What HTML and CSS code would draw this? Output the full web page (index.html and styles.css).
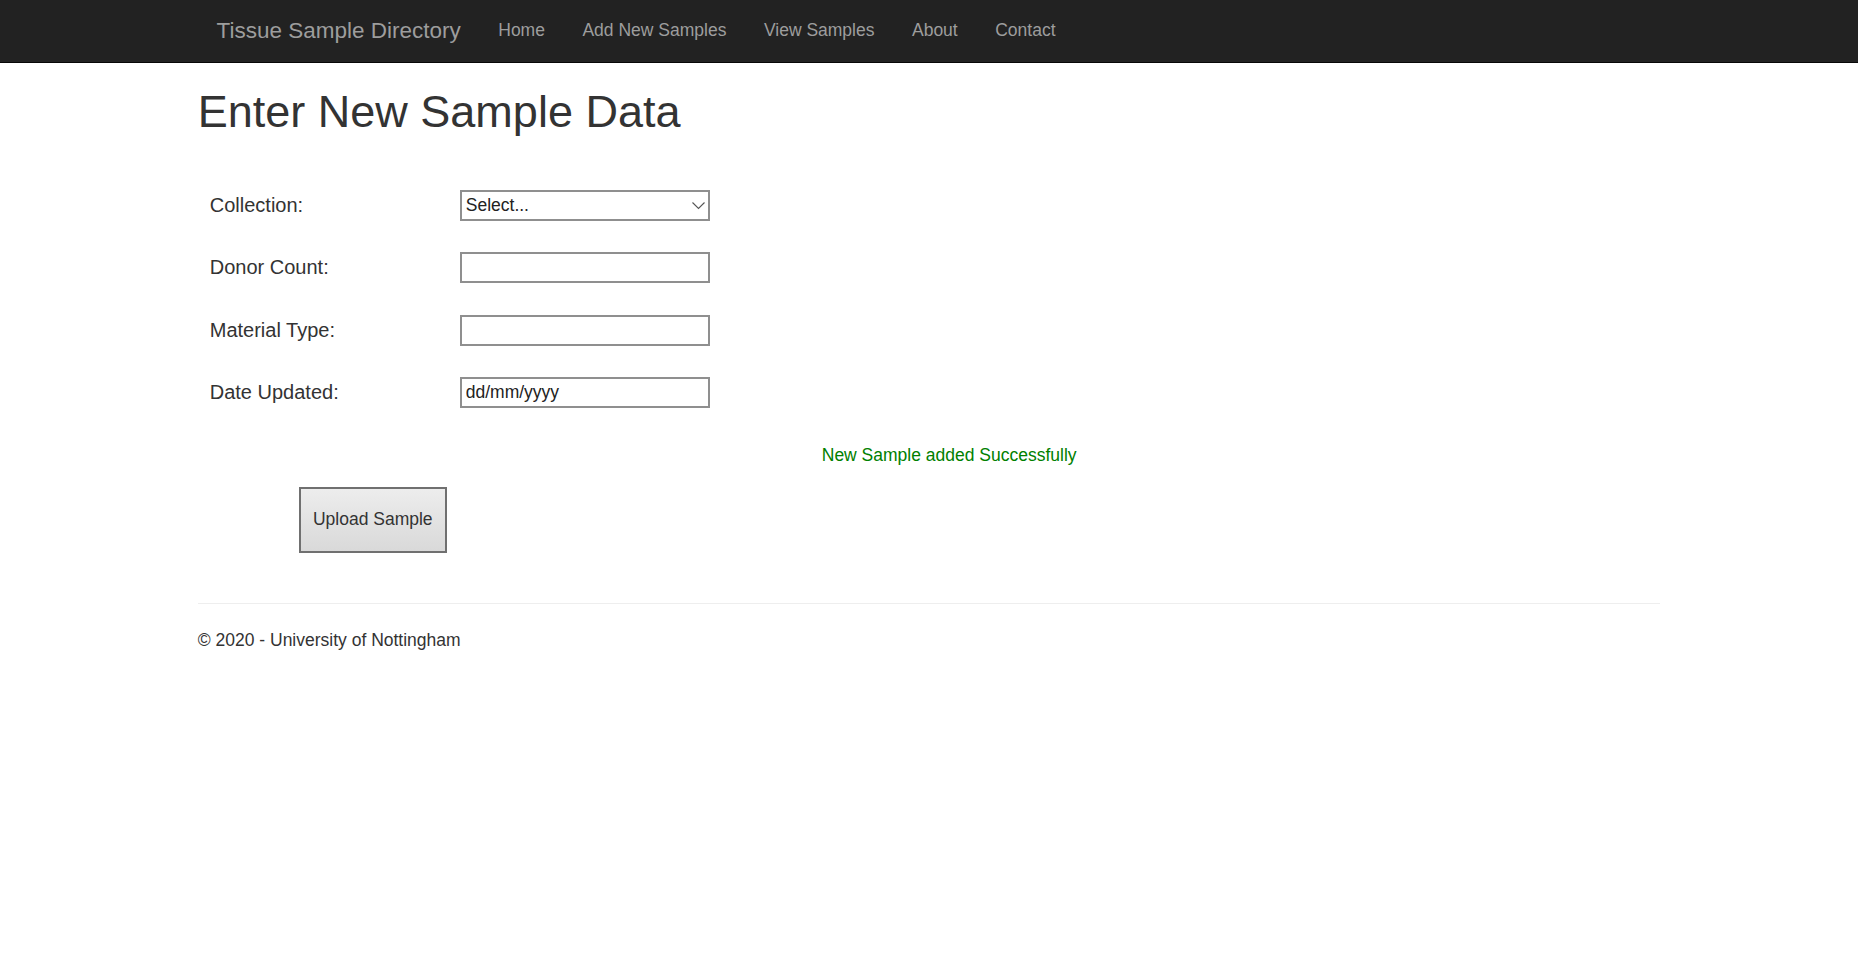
FILE: index.html
```html
<!DOCTYPE html>
<html lang="en">
<head>
<meta charset="utf-8">
<title>Enter New Sample Data - Tissue Sample Directory</title>
<link rel="stylesheet" href="styles.css">
</head>
<body>
<nav class="navbar">
  <div class="nav-container">
    <a class="brand" href="#">Tissue Sample Directory</a>
    <ul class="nav-links">
      <li><a href="#">Home</a></li>
      <li><a href="#">Add New Samples</a></li>
      <li><a href="#">View Samples</a></li>
      <li><a href="#">About</a></li>
      <li><a href="#">Contact</a></li>
    </ul>
  </div>
</nav>
<main class="container">
  <h1 class="page-title">Enter New Sample Data</h1>
  <form class="sample-form">
    <div class="form-row">
      <label class="form-label">Collection:</label>
      <div class="select-wrap">
        <select class="form-select"><option>Select...</option></select>
        <svg class="select-arrow" width="13" height="8" viewBox="0 0 13 8"><polyline points="0.5,0.5 6.5,6.5 12.5,0.5" fill="none" stroke="#555" stroke-width="1.1"/></svg>
      </div>
    </div>
    <div class="form-row">
      <label class="form-label">Donor Count:</label>
      <input class="form-input" type="text">
    </div>
    <div class="form-row">
      <label class="form-label">Material Type:</label>
      <input class="form-input" type="text">
    </div>
    <div class="form-row">
      <label class="form-label">Date Updated:</label>
      <input class="form-input" type="text" value="dd/mm/yyyy">
    </div>
    <div class="form-row">
      <span class="success-msg">New Sample added Successfully</span>
    </div>
    <div class="button-row">
      <button class="upload-btn" type="button">Upload Sample</button>
    </div>
  </form>
  <hr class="divider">
  <footer class="footer">
    <p>&copy; 2020 - University of Nottingham</p>
  </footer>
</main>
</body>
</html>
```
FILE: styles.css
```css
html, body {
  margin: 0;
  padding: 0;
  background: #fff;
}
body {
  font-family: "Liberation Sans", Arial, Helvetica, sans-serif;
  font-size: 17.5px;
  line-height: 25px;
  color: #333;
}
.navbar {
  background: #222;
  height: 61.5px;
  border-bottom: 1px solid #080808;
}
.nav-container {
  width: 1462.5px;
  margin: 0 auto;
  box-sizing: border-box;
  padding: 0 18.75px;
  display: flex;
  align-items: center;
  height: 100%;
}
.brand {
  color: #9d9d9d;
  text-decoration: none;
  font-size: 22.5px;
  line-height: 25px;
  padding: 18.75px 18.75px;
  margin-left: -18.75px;
}
.nav-links {
  list-style: none;
  margin: 0;
  padding: 0;
  display: flex;
}
.nav-links a {
  display: block;
  color: #9d9d9d;
  text-decoration: none;
  padding: 18.75px 18.75px;
  line-height: 25px;
}
.container {
  width: 1462.5px;
  margin: 0 auto;
}
.page-title {
  font-size: 45px;
  line-height: 49.5px;
  font-weight: 500;
  margin: 24px 0 12.5px;
  color: #333;
}
.sample-form {
  margin-top: 38px;
  padding-left: 12px;
}
.form-row {
  display: flex;
  align-items: center;
  height: 62.5px;
}
.form-label {
  width: 250px;
  font-size: 20px;
  color: #333;
}
.select-wrap {
  position: relative;
  width: 250px;
  height: 31px;
}
.form-select, .form-input {
  width: 250px;
  height: 31px;
  box-sizing: border-box;
  border: 2px solid #8f8f8f;
  background: #fff;
  font-family: "Liberation Sans", Arial, sans-serif;
  font-size: 17.5px;
  color: #222;
  padding: 0 4px;
  margin: 0;
  border-radius: 0;
}
.form-select {
  appearance: none;
  -webkit-appearance: none;
  padding-left: 4px;
}
.select-arrow {
  position: absolute;
  right: 5px;
  top: 12px;
}
.success-msg {
  margin-left: 612px;
  color: #008000;
}
.button-row {
  padding-left: 89px;
}
.upload-btn {
  width: 148px;
  height: 66px;
  border: 2px solid #707070;
  background: linear-gradient(#ededed, #d9d9d9);
  font-family: "Liberation Sans", Arial, sans-serif;
  font-size: 17.5px;
  color: #333;
  padding: 0;
  margin: 0;
  border-radius: 0;
}
.divider {
  border: 0;
  border-top: 1px solid #eee;
  margin: 50px 0 24px;
}
.footer p {
  margin: 0 0 12.5px;
}
```
